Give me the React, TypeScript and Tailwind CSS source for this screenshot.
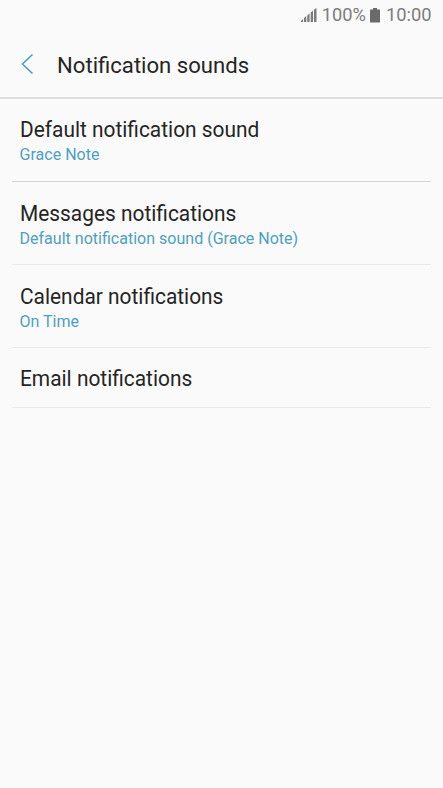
interface SoundSetting {
  title: string
  value?: string
  rowClass: string
}

const settings: SoundSetting[] = [
  { title: 'Default notification sound', value: 'Grace Note', rowClass: 'h-[83px] pt-[18px] border-[#d4d4d4]' },
  { title: 'Messages notifications', value: 'Default notification sound (Grace Note)', rowClass: 'h-[83px] pt-[19px] border-[#e9e9e9]' },
  { title: 'Calendar notifications', value: 'On Time', rowClass: 'h-[83px] pt-[19px] border-[#e9e9e9]' },
  { title: 'Email notifications', rowClass: 'h-[60px] pt-[18px] border-[#e9e9e9]' },
]

function StatusBar() {
  return (
    <div className="flex h-[30px] items-center justify-end pr-[11.5px] text-[18.3px] leading-[30px] text-[#7c7c7c]">
      <svg className="mr-[5px] h-[15px] w-[16px]" viewBox="0 0 16 15" fill="currentColor">
        <path d="M0 14v-1l2-2v3zM3 14v-4l2.300-2v6zM6.300 14V7.500l2.300-2V14zM9.700 14V4.500l2.300-2v11.500zM13 14V1.500l2.500-1.500v14z" />
      </svg>
      <span>100%</span>
      <svg className="ml-[4px] mr-[6px] h-[15px] w-[10px]" viewBox="0 0 10 15" fill="#6a6a6a">
        <path d="M3 0h4v1.500h3V14.500H0V1.500h3z" />
      </svg>
      <span>10:00</span>
    </div>
  )
}

export default function App() {
  return (
    <div className="h-[788px] w-[443px] bg-[#fafafa] font-['Roboto',sans-serif] text-[#252525]">
      <StatusBar />
      <header className="flex h-[69px] items-center border-b-2 border-[#dedede] pl-[21px]">
        <button aria-label="Back" className="mr-[21.5px]">
          <svg className="h-[20px] w-[14px]" viewBox="0 0 14 20" fill="none" stroke="#4f9fbd" strokeWidth="1.6">
            <path d="M11.500 0.500L1.500 10l10 9.500" />
          </svg>
        </button>
        <h1 className="origin-left scale-x-[0.975] pt-[4px] text-[22.7px] leading-[26px]">Notification sounds</h1>
      </header>
      <main className="px-3">
        {settings.map(item => (
          <div key={item.title} className={`border-b px-[7.5px] ${item.rowClass}`}>
            <p className="origin-left scale-x-[0.963] text-[21.7px] leading-[26px]">{item.title}</p>
            {item.value && <p className="text-[16.05px] leading-[24px] text-[#4f9fbd]">{item.value}</p>}
          </div>
        ))}
      </main>
    </div>
  )
}
